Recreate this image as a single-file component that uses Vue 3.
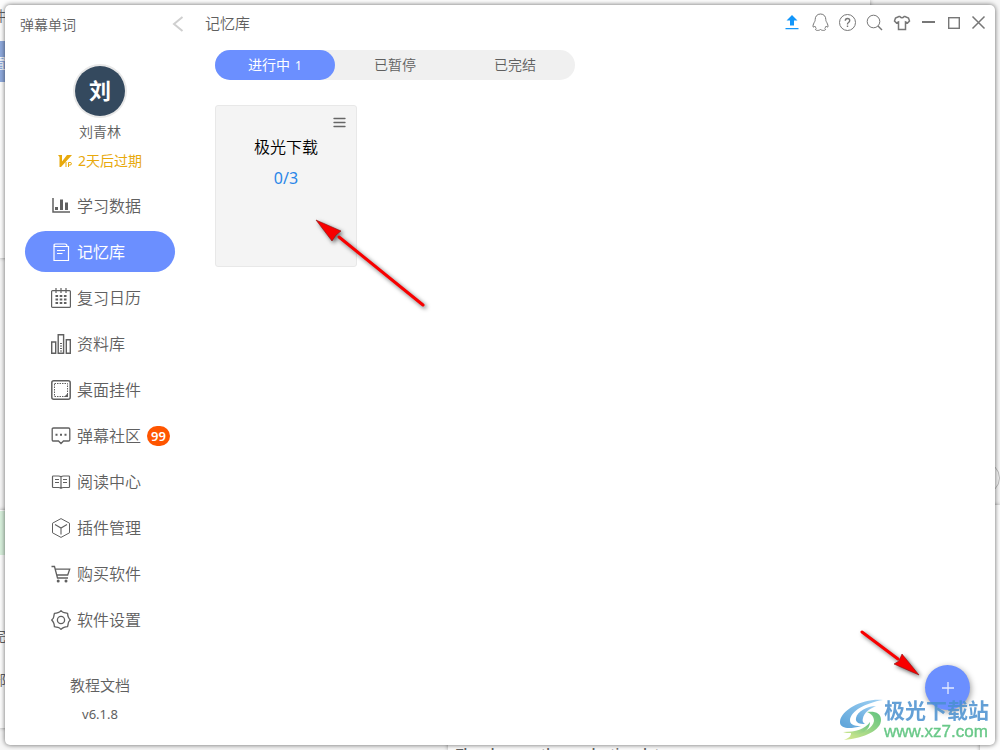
<script setup>
import { ref } from 'vue'

const navItems = [
  { id: 'stats', label: '学习数据' },
  { id: 'memory', label: '记忆库' },
  { id: 'calendar', label: '复习日历' },
  { id: 'library', label: '资料库' },
  { id: 'widget', label: '桌面挂件' },
  { id: 'community', label: '弹幕社区', badge: 99 },
  { id: 'reading', label: '阅读中心' },
  { id: 'plugins', label: '插件管理' },
  { id: 'shop', label: '购买软件' },
  { id: 'settings', label: '软件设置' },
]
const activeNav = ref('memory')

const tabs = [
  { id: 'running', label: '进行中', count: 1 },
  { id: 'paused', label: '已暂停' },
  { id: 'done', label: '已完结' },
]
const activeTab = ref('running')

const decks = [{ name: '极光下载', progress: '0/3' }]
</script>

<template>
  <div class="desktop">
    <div class="behind" aria-hidden="true">
      <div class="sheet sheet-top"></div>
      <div class="sheet sheet-left"></div>
      <div class="sheet sheet-bottom"></div>
      <div class="sheet sheet-right"></div>
      <div class="ring"></div>
      <div class="strip strip-blue"></div>
      <div class="strip strip-green"></div>
      <span class="scrap scrap-a">件</span>
      <span class="scrap scrap-b">置</span>
      <span class="scrap scrap-c">完</span>
      <span class="scrap scrap-d">部</span>
      <p class="scrap-line">The plane on the production data</p>
    </div>

    <div class="window">
      <aside class="sidebar">
        <div class="brand">
          <span>弹幕单词</span>
          <button class="plain back" aria-label="返回">
            <svg width="12" height="16" viewBox="0 0 12 16"><path d="M10.500 1L2 8l8.500 7" fill="none" stroke="#cfcfcf" stroke-width="2" /></svg>
          </button>
        </div>

        <div class="avatar">刘</div>
        <div class="user">刘青林</div>
        <div class="vip">
          <svg width="14" height="14" viewBox="0 0 14 14" fill="none" stroke="#e8a90c">
            <path d="M0 1h4v6.500L9 1h5L3 13H1.500V3z" fill="#e8a90c" stroke="none" />
            <path d="M8 8v5M10.500 13V8.500h1.500q1.500 0 1.500 1.200T12 11h-1.500" stroke-width="1" />
          </svg>
          <span>2天后过期</span>
        </div>

        <nav class="nav">
          <button
            v-for="item in navItems"
            :key="item.id"
            class="nav-item"
            :class="{ active: item.id === activeNav }"
            @click="activeNav = item.id"
          >
            <svg class="icon" width="20" height="20" viewBox="0 0 20 20">
              <g v-if="item.id === 'stats'">
                <path d="M2 2v14h17" stroke-width="1.500" />
                <path d="M4 11h3v3H4zM9 3.500h3V14H9zM14 6.500h3V14h-3z" class="solid" />
              </g>
              <g v-else-if="item.id === 'memory'">
                <path d="M3 4v14.500h14.500V4.500H5Q3 4.500 3 3.200T5 2h9q2 0 2 2.200" stroke-width="1.200" />
                <path d="M6 8.500h8M6 11.500h5.500" stroke-width="1.200" />
              </g>
              <g v-else-if="item.id === 'calendar'">
                <rect x=".6" y="2.600" width="18.800" height="16.800" rx="1" stroke-width="1.200" />
                <path d="M5 0v5M10 0v5M15 0v5" stroke-width="1.200" />
                <path d="M4.500 8h11M4.500 11.500h11M4.500 15h11" stroke-width="2" stroke-dasharray="2.600 1.600" />
              </g>
              <g v-else-if="item.id === 'library'">
                <path d="M.7 8h4v11.300h-4zM7.200.7h5.400v18.600H7.200zM15.300 5.700h4v13.600h-4z" stroke-width="1.400" />
                <path d="M9 9.500h2M9 12h2M9 14.500h2M9 17h2" stroke-width="1" />
              </g>
              <g v-else-if="item.id === 'widget'">
                <rect x=".8" y=".8" width="18.400" height="18.400" rx="2" stroke-width="1.500" />
                <rect x="3.500" y="3.500" width="13" height="13" stroke-width="1" stroke-dasharray="1.500 1" />
                <path d="M17 13v4h-4z" class="solid" />
              </g>
              <g v-else-if="item.id === 'community'">
                <path d="M2.500 2h15q1.300 0 1.300 1.300v10.400q0 1.300-1.300 1.300h-5L10 17.500 7.500 15h-5q-1.300 0-1.300-1.300V3.300Q1.200 2 2.500 2z" stroke-width="1.300" />
                <path d="M4.500 7.800h2v2h-2zM9 7.800h2v2H9zM13.500 7.800h2v2h-2z" class="solid" />
              </g>
              <g v-else-if="item.id === 'reading'">
                <path d="M10 4.800Q9 4 7.500 4H2.300q-.8 0-.8.8v9.900q0 .8.8.8h5.200q1.500 0 2.500.8 1-.8 2.500-.8h5.200q.8 0 .8-.8V4.800q0-.8-.8-.8h-5.200Q11 4 10 4.800zv11.500" stroke-width="1.200" />
                <path d="M4 7.500h4M4 10.500h4M12 7.500h4M12 10.500h4" stroke-width="1.200" />
              </g>
              <g v-else-if="item.id === 'plugins'">
                <path d="M10 .6L18.500 5.200v9.600L10 19.400 1.500 14.800V5.200z" stroke-width="1" />
                <path d="M4 6.600L10 10l6-3.400M10 10v6.500" stroke-width="1.100" />
              </g>
              <g v-else-if="item.id === 'shop'">
                <path d="M.5 2.500h3L6.500 14H17M4.200 5.200h14.500L16.700 11H6" stroke-width="1.300" />
                <circle cx="7.200" cy="17" r="1.500" class="solid" />
                <circle cx="15" cy="17" r="1.500" class="solid" />
              </g>
              <g v-else>
                <path d="M10 .7Q11.500 2.500 13 2.700T16.600 3.400Q16.700 5.500 17.300 7T19.300 10Q17.500 11.500 17.300 13T16.600 16.600Q14.500 16.700 13 17.300T10 19.300Q8.500 17.500 7 17.300T3.400 16.600Q3.300 14.500 2.700 13T.7 10Q2.500 8.500 2.700 7T3.400 3.400Q5.500 3.300 7 2.700T10 .7z" stroke-width="1.300" stroke-linejoin="round" />
                <circle cx="10" cy="10" r="3.600" stroke-width="1.300" />
              </g>
            </svg>
            <span class="label">{{ item.label }}</span>
            <span v-if="item.badge" class="badge">{{ item.badge }}</span>
          </button>
        </nav>

        <footer class="about">
          <a href="#docs">教程文档</a>
          <span class="version">v6.1.8</span>
        </footer>
      </aside>

      <main class="main">
        <header class="topbar">
          <h1>记忆库</h1>
          <div class="tools">
            <button class="plain" aria-label="上传">
              <svg width="20" height="20" viewBox="0 0 20 20"><path d="M9 3l5.500 5.500H11V13.500H7V8.500H3.500zM2.500 16h13v1.300h-13z" fill="#1296fa" /></svg>
            </button>
            <button class="plain" aria-label="QQ">
              <svg width="20" height="20" viewBox="0 0 20 20"><path d="M10.500 2c-3.500 0-5.300 2.500-5.300 5.500 0 1.500-.5 2-1 3-1 2-1.500 3.500-1 4.500.5.500 1.200-.5 1.600-1 .3 1.200.8 1.700 1.500 2.300-1 .6-1.200 1.700.2 2 1.500.3 3 0 4-.8 1 .8 2.500 1.100 4 .8 1.400-.3 1.200-1.400.2-2 .7-.6 1.200-1.100 1.500-2.300.4.500 1.100 1.500 1.600 1 .5-1 0-2.500-1-4.500-.5-1-1-1.500-1-3 0-3-1.800-5.500-5.300-5.500z" /></svg>
            </button>
            <button class="plain" aria-label="帮助">
              <svg width="20" height="20" viewBox="0 0 20 20"><circle cx="10.500" cy="10.500" r="8" /><path d="M8.300 8.700Q8.300 6.500 10.500 6.500t2.200 2Q12.700 9.700 11.500 10.500t-1 2M10.500 13.500v1.600" stroke-width="1.400" /></svg>
            </button>
            <button class="plain" aria-label="搜索">
              <svg width="20" height="20" viewBox="0 0 20 20"><circle cx="9.500" cy="9.500" r="6.300" /><path d="M14 14l4 4" stroke-width="1.400" /></svg>
            </button>
            <button class="plain" aria-label="皮肤">
              <svg width="20" height="20" viewBox="0 0 20 20"><path d="M8 4.500L4.500 6 3.500 9l2 2L7.500 10v7.500h7V10l2 1 2-2-1-3L14 4.500h-.8q-2.200 2.500-4.400 0z" stroke-width="1.500" /></svg>
            </button>
          </div>
          <div class="controls">
            <button class="plain" aria-label="最小化">
              <svg width="20" height="20" viewBox="0 0 20 20"><path d="M4 10h13" stroke-width="2" /></svg>
            </button>
            <button class="plain" aria-label="最大化">
              <svg width="20" height="20" viewBox="0 0 20 20"><rect x="5.700" y="5.700" width="10.600" height="10.600" stroke-width="1.400" /></svg>
            </button>
            <button class="plain" aria-label="关闭">
              <svg width="20" height="20" viewBox="0 0 20 20"><path d="M4.500 4.500l12 12M16.500 4.500l-12 12" stroke-width="1.500" /></svg>
            </button>
          </div>
        </header>

        <div class="tabs" role="tablist">
          <button
            v-for="tab in tabs"
            :key="tab.id"
            role="tab"
            class="tab"
            :class="{ active: tab.id === activeTab }"
            :aria-selected="tab.id === activeTab"
            @click="activeTab = tab.id"
          >
            {{ tab.label }}<span v-if="tab.count" class="count">{{ tab.count }}</span>
          </button>
        </div>

        <section class="decks">
          <article v-for="deck in decks" :key="deck.name" class="deck">
            <button class="plain deck-menu" aria-label="菜单">
              <svg width="14" height="14" viewBox="0 0 14 14"><path d="M2 2.500h11M2 6.500h11M2 10.500h11" stroke="#666" stroke-width="1.300" stroke-linecap="round" /></svg>
            </button>
            <h2>{{ deck.name }}</h2>
            <p>{{ deck.progress }}</p>
          </article>
        </section>

        <button class="fab" aria-label="添加">
          <svg width="14" height="14" viewBox="0 0 14 14"><path d="M7 1v12M1 7h12" stroke="#e4eaff" stroke-width="1.300" /></svg>
        </button>

        <div class="watermark">
          <svg width="44" height="42" viewBox="0 0 44 42">
            <defs>
              <linearGradient id="swirl-blue" x1="0" y1="1" x2="1" y2="0">
                <stop offset="0" stop-color="#3f93d2" />
                <stop offset="1" stop-color="#8fcaf2" />
              </linearGradient>
              <linearGradient id="swirl-green" x1="0" y1="1" x2="1" y2="0">
                <stop offset="0" stop-color="#d3e67a" />
                <stop offset="1" stop-color="#45b96b" />
              </linearGradient>
            </defs>
            <path d="M43 1C24-1 2 10 0 22c-1 7 8 9 21 5-8 0-11-2-11-6C11 12 25 4 43 1z" fill="url(#swirl-blue)" />
            <path d="M36 7C27 7 17 13 16 19c-1 5 4 6 9 6-2-1-3-3-2-6 1-5 6-9 13-12z" fill="url(#swirl-blue)" />
            <path d="M27 13c8-1 14 1 14 8 0 10-16 18-37 20 4-2 6-3 8-6 12-1 21-6 22-13 0-4-2-7-7-9z" fill="url(#swirl-green)" />
            <path d="M3 33c13 0 22-3 27-10 0 8-8 13-20 14 1-1 1-2 1-3-3 0-6 0-8-1z" fill="url(#swirl-green)" />
          </svg>
          <div>
            <div class="site">极光下载站</div>
            <div class="url">www.xz7.com</div>
          </div>
        </div>
      </main>
    </div>

    <svg class="arrow arrow-deck" width="112" height="92" viewBox="0 0 112 92" aria-hidden="true">
      <path d="M24 18L108 86" stroke="#f80000" stroke-width="3" stroke-linecap="round" />
      <path d="M1 1l25 11-5 4-4 6z" fill="#f80000" stroke="#8c1010" stroke-width=".6" />
    </svg>
    <svg class="arrow arrow-fab" width="60" height="48" viewBox="0 0 60 48" aria-hidden="true">
      <path d="M3 3L39 30" stroke="#f80000" stroke-width="3" stroke-linecap="round" />
      <path d="M60 46L35 35l5-3 3-7z" fill="#f80000" stroke="#8c1010" stroke-width=".6" />
    </svg>
  </div>
</template>

<style>
html,
body {
  margin: 0;
  overflow: hidden;
}
</style>

<style scoped>
.desktop {
  position: relative;
  display: flex;
  box-sizing: border-box;
  min-height: 100vh;
  padding: 5px;
  overflow: hidden;
  background: #f6f6f6;
  color: #606060;
  font-family: "Noto Sans", "Noto Sans CJK SC", sans-serif;
  font-size: 14px;
  font-weight: 350;
}
button {
  margin: 0;
  border: 0;
  background: none;
  color: inherit;
  font: inherit;
  cursor: pointer;
}
h1,
h2,
p {
  margin: 0;
  font-weight: inherit;
}
.plain {
  display: flex;
  align-items: center;
  justify-content: center;
  padding: 0;
}

.behind {
  position: absolute;
  inset: 0;
}
.sheet {
  position: absolute;
  background: #fdfdfd;
  box-shadow: 0 0 4px #999;
}
.sheet-top { left: 0; top: 0; width: 870px; height: 258px; }
.sheet-left { left: 0; top: 510px; width: 40px; height: 218px; }
.sheet-bottom { left: 448px; bottom: 0; width: 600px; height: 100px; }
.sheet-right { right: 0; top: 505px; width: 20px; height: 260px; }
.ring {
  position: absolute;
  right: 0;
  top: 462px;
  width: 30px;
  height: 30px;
  border: 1px solid #bbb;
  border-radius: 50%;
}
.strip {
  position: absolute;
  left: 0;
  width: 20px;
}
.strip-blue { top: 41px; height: 41px; background: #8ea9dc; }
.strip-green { top: 511px; height: 44px; background: #d8f0dc; }
.scrap {
  position: absolute;
  left: -8px;
  font-size: 14px;
  line-height: 20px;
}
.scrap-a { top: 6px; }
.scrap-b { top: 53px; color: #fff; }
.scrap-c { top: 626px; }
.scrap-d { top: 670px; }
.scrap-line {
  position: absolute;
  left: 456px;
  top: 743px;
  font-size: 13px;
  line-height: 20px;
  font-weight: 600;
  white-space: nowrap;
}

.window {
  position: relative;
  display: flex;
  flex: 1;
  border-radius: 5px;
  background: #fff;
  box-shadow: 0 0 5px rgba(0, 0, 0, 0.6);
}

.sidebar {
  display: flex;
  flex-direction: column;
  align-items: center;
  width: 190px;
}
.brand {
  display: flex;
  align-items: center;
  justify-content: space-between;
  align-self: stretch;
  height: 38px;
  padding: 0 11px 0 15px;
}
.avatar {
  width: 50px;
  height: 50px;
  margin-top: 23px;
  border-radius: 50%;
  background: #34495e;
  box-shadow: 0 0 0 2px #e8e8e8;
  color: #fff;
  font-size: 22px;
  font-weight: 700;
  line-height: 48px;
  text-align: center;
}
.user {
  margin-top: 6px;
  line-height: 20px;
}
.vip {
  display: flex;
  align-items: center;
  gap: 6px;
  margin-top: 9px;
  color: #e8a90c;
  font-weight: 400;
  line-height: 20px;
}
.nav {
  display: flex;
  flex-direction: column;
  gap: 5px;
  align-self: stretch;
  margin: 14px 20px 0;
}
.nav-item {
  display: flex;
  align-items: center;
  gap: 6px;
  height: 41px;
  padding: 0 0 0 26px;
  border-radius: 21px;
  font-size: 16px;
  white-space: nowrap;
}
.nav-item.active {
  background: #6b8fff;
  color: #fff;
  font-weight: 400;
}
.label {
  padding-bottom: 2px;
}
.icon {
  flex: none;
  fill: none;
  stroke: currentColor;
}
.solid {
  fill: currentColor;
  stroke: none;
}
.badge {
  padding: 0 4px;
  border-radius: 10px;
  background: #ff5500;
  color: #fff;
  font-size: 13px;
  font-weight: 600;
  line-height: 20px;
}
.about {
  display: flex;
  flex-direction: column;
  align-items: center;
  gap: 9px;
  margin-top: 35px;
  line-height: 20px;
}
.about a {
  color: inherit;
  font-size: 15px;
  text-decoration: none;
}
.version {
  font-size: 13px;
  font-weight: 400;
}

.main {
  position: relative;
  flex: 1;
  min-width: 0;
}
.topbar {
  display: flex;
  gap: 7px;
  height: 38px;
  padding: 0 7px 0 10px;
}
.topbar h1 {
  flex: 1;
  font-size: 15px;
  line-height: 36px;
}
.tools,
.controls {
  display: flex;
  align-items: center;
  height: 34px;
}
.tools { gap: 7px; }
.controls { gap: 5px; }
.tools svg,
.controls svg {
  fill: none;
  stroke: #777;
}
.tools svg [fill] {
  stroke: none;
}

.tabs {
  display: grid;
  grid-template-columns: repeat(3, 1fr);
  width: 360px;
  max-width: 100%;
  margin: 7px 20px 0;
  border-radius: 15px;
  background: #f0f0f0;
}
.tab {
  height: 30px;
  padding: 0;
  border-radius: 15px;
  line-height: 30px;
}
.tab.active {
  background: #6b8fff;
  color: #fff;
  font-weight: 400;
}
.count {
  margin-left: 5px;
  font-size: 12px;
}

.decks {
  display: flex;
  flex-wrap: wrap;
  gap: 20px;
  margin: 25px 20px 0;
}
.deck {
  display: flex;
  flex-direction: column;
  align-items: center;
  box-sizing: border-box;
  width: 142px;
  min-height: 162px;
  padding: 10px;
  border: 1px solid #e8e8e8;
  border-radius: 3px;
  background: #f4f4f4;
  font-size: 16px;
  line-height: 24px;
}
.deck-menu {
  align-self: flex-end;
}
.deck h2 {
  margin-top: 5px;
  color: #000;
  font-size: 16px;
}
.deck p {
  margin-top: 7px;
  color: #2a86e8;
  font-weight: 400;
}

.fab {
  position: absolute;
  right: 25px;
  bottom: 35px;
  display: flex;
  align-items: center;
  justify-content: center;
  width: 45px;
  height: 45px;
  padding: 0;
  border-radius: 50%;
  background: #6b8fff;
  box-shadow: 1px 2px 6px rgba(0, 0, 0, 0.4);
}
.watermark {
  position: absolute;
  right: 6px;
  bottom: 3px;
  display: flex;
  align-items: center;
  opacity: 0.85;
  white-space: nowrap;
}
.site {
  color: #4a90cf;
  font-size: 21px;
  font-weight: 700;
  line-height: 24px;
}
.url {
  color: #4fbf74;
  font-family: "Liberation Sans", Arial, sans-serif;
  font-size: 17px;
  font-weight: 400;
  line-height: 20px;
  -webkit-text-stroke: 0.4px #4fbf74;
}

.arrow {
  position: absolute;
  overflow: visible;
  filter: drop-shadow(2px 2px 2px rgba(0, 0, 0, 0.6));
  pointer-events: none;
}
.arrow-deck { left: 315px; top: 219px; }
.arrow-fab { right: 81px; bottom: 73px; }
</style>
